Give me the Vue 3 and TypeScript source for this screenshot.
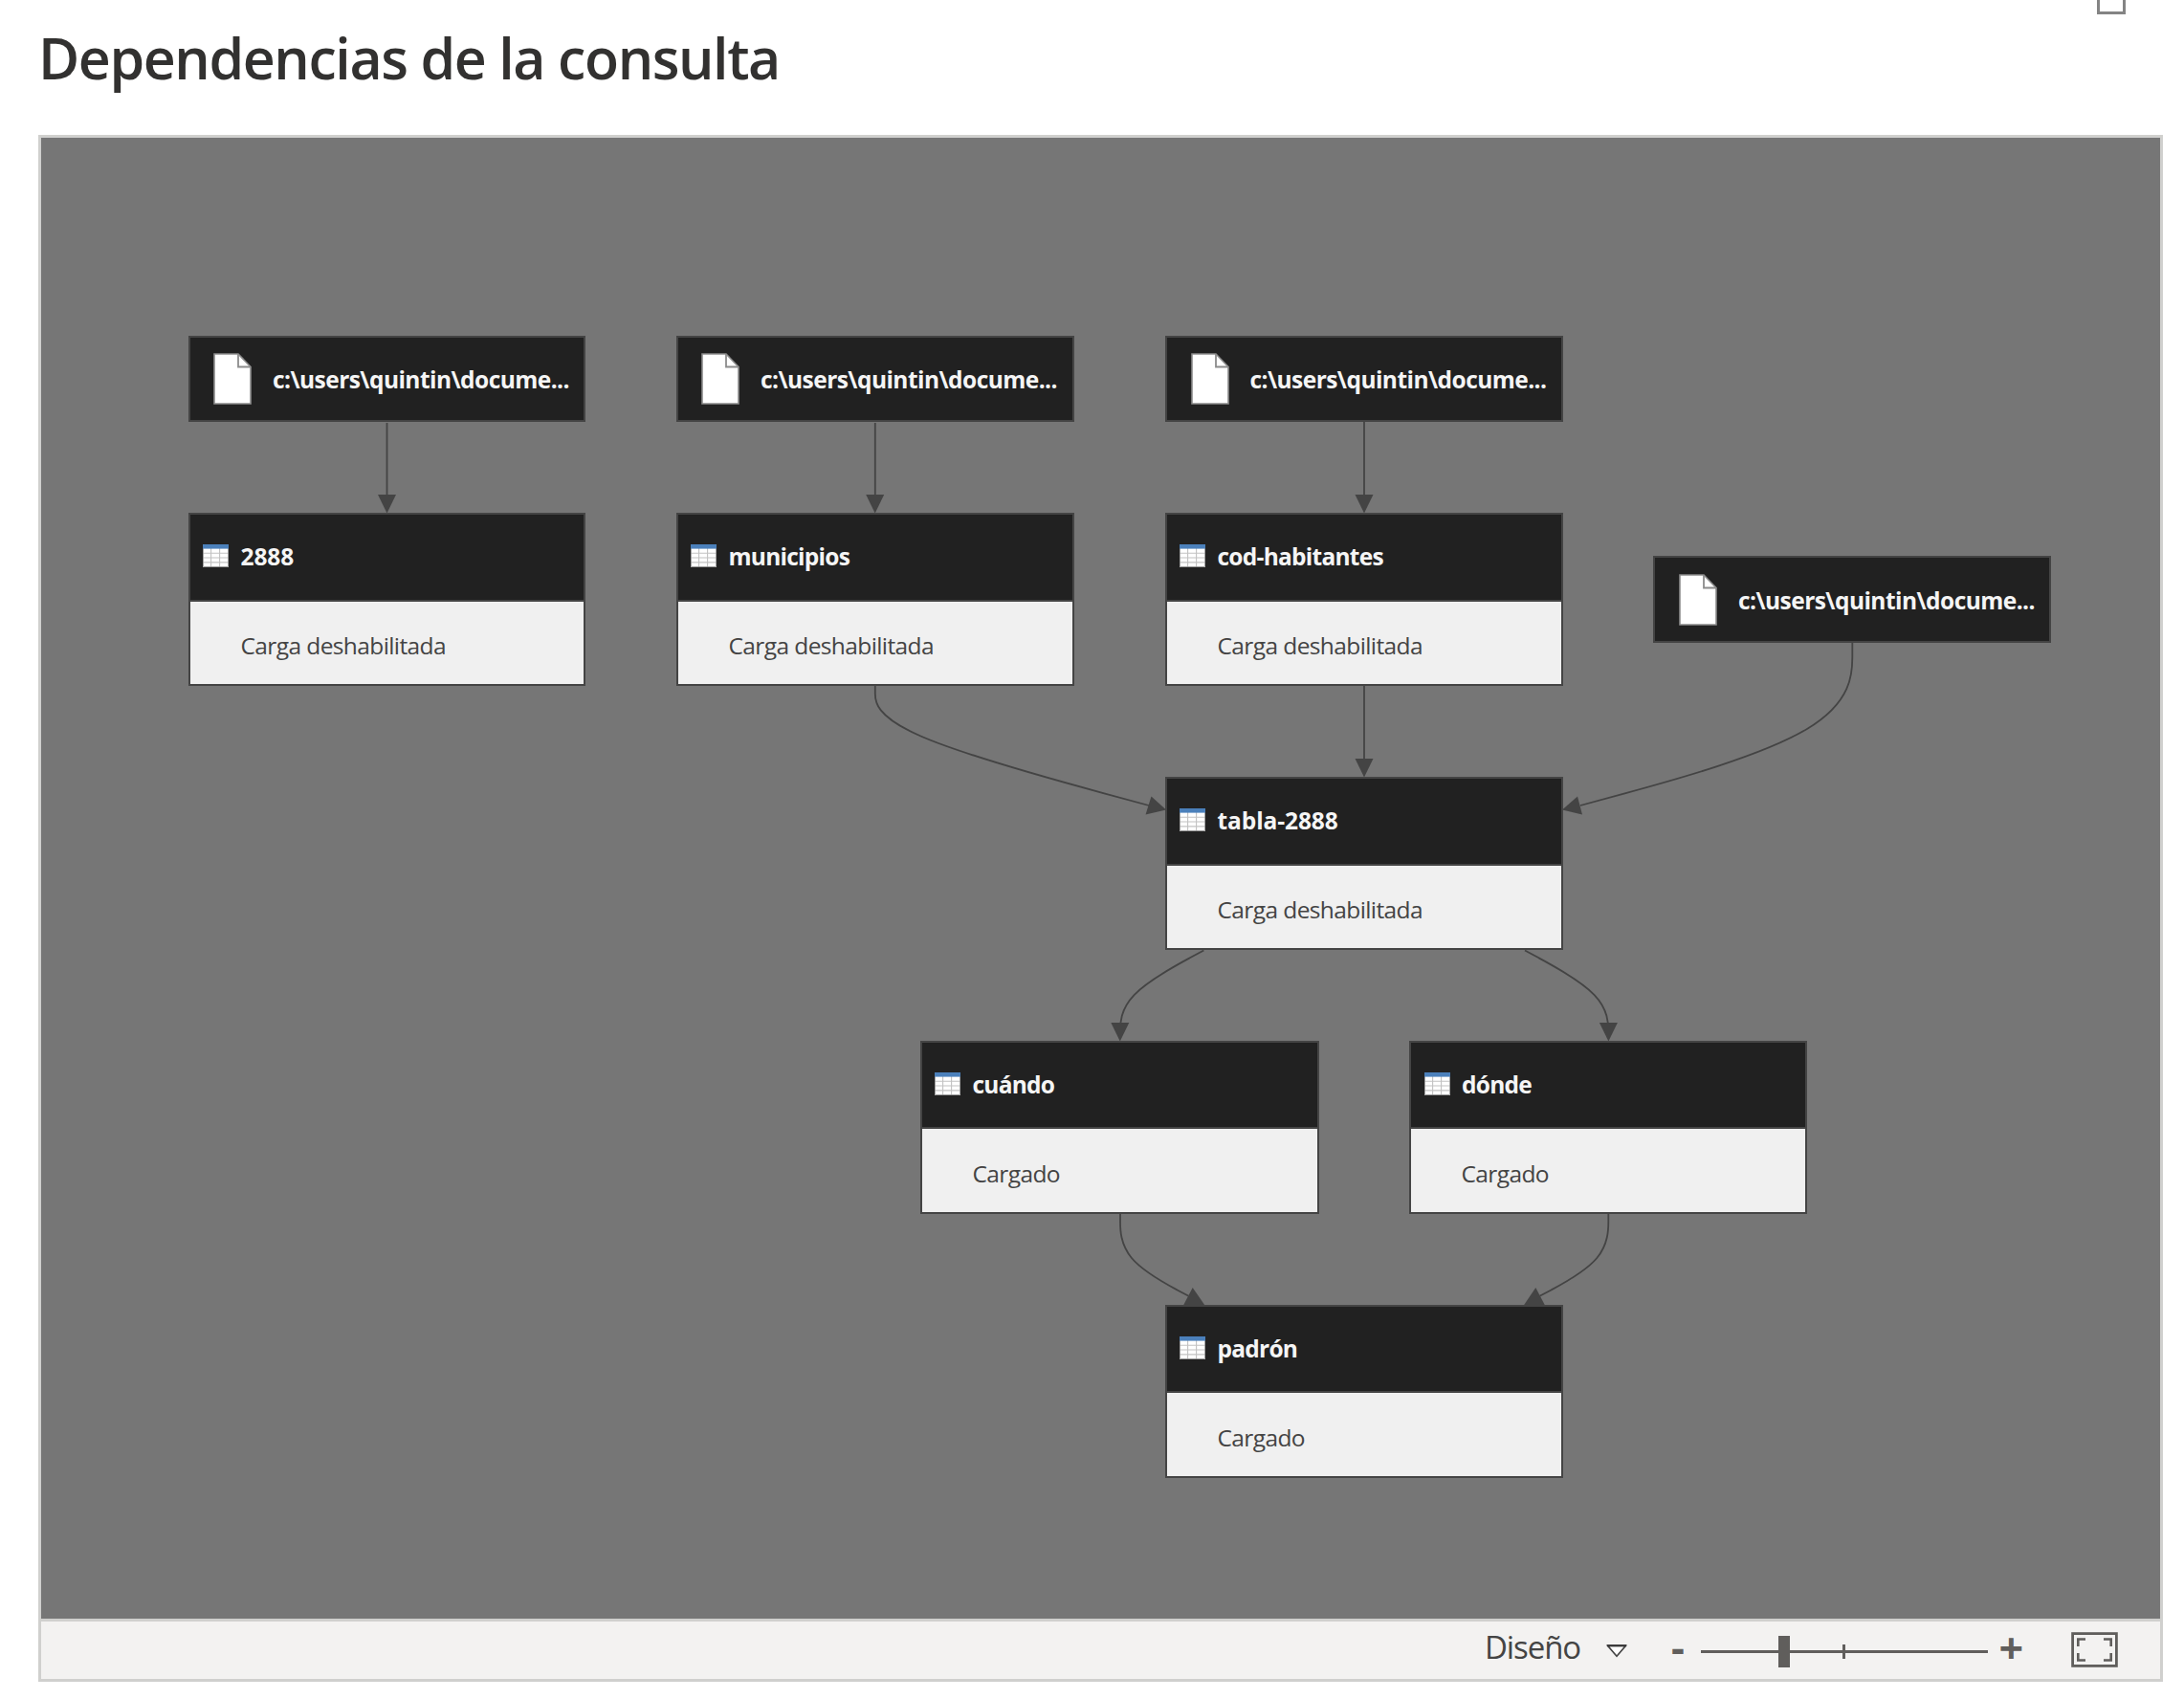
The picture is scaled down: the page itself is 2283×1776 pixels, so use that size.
<script setup lang="ts">
interface DiagramNode {
  id: string
  x: number
  y: number
  w: number
  h: number
  // Left padding in front of the icon.
  pad: number
}

interface QueryNode extends DiagramNode {
  name: string
  status: string
  head: number
}

interface Edge {
  id: string
  path: string
  arrow: string
}

// Diagram coordinates are window coordinates; the canvas starts at this origin.
const origin = { x: 43, y: 144 }

const fileLabel = 'c:\\users\\quintin\\docume...'

const files: DiagramNode[] = [
  { id: 'f1', x: 197, y: 351, w: 415, h: 90, pad: 24 },
  { id: 'f2', x: 707, y: 351, w: 416, h: 90, pad: 24 },
  { id: 'f3', x: 1218, y: 351, w: 416, h: 90, pad: 24.5 },
  { id: 'f4', x: 1728, y: 581, w: 416, h: 91, pad: 25 },
]

const queries: QueryNode[] = [
  { id: 'q1', name: '2888', status: 'Carga deshabilitada', x: 197, y: 536, w: 415, h: 181, head: 91, pad: 13 },
  { id: 'q2', name: 'municipios', status: 'Carga deshabilitada', x: 707, y: 536, w: 416, h: 181, head: 91, pad: 13 },
  { id: 'q3', name: 'cod-habitantes', status: 'Carga deshabilitada', x: 1218, y: 536, w: 416, h: 181, head: 91, pad: 13 },
  { id: 'q4', name: 'tabla-2888', status: 'Carga deshabilitada', x: 1218, y: 812, w: 416, h: 181, head: 91, pad: 13 },
  { id: 'q5', name: 'cuándo', status: 'Cargado', x: 962, y: 1088, w: 417, h: 181, head: 90, pad: 13 },
  { id: 'q6', name: 'dónde', status: 'Cargado', x: 1473, y: 1088, w: 416, h: 181, head: 90, pad: 13.5 },
  { id: 'q7', name: 'padrón', status: 'Cargado', x: 1218, y: 1364, w: 416, h: 181, head: 90, pad: 13 },
]

type Point = [number, number]

// B-spline through one bend point, as a pair of cubic segments.
function spline(a: Point, b: Point, c: Point): string {
  const mix = (wa: number, wb: number, wc: number): string => {
    const s = wa + wb + wc
    return [0, 1].map((i) => ((wa * a[i] + wb * b[i] + wc * c[i]) / s).toFixed(2)).join(',')
  }
  return (
    `M${a} L${mix(5, 1, 0)} C${mix(2, 1, 0)} ${mix(1, 2, 0)} ${mix(1, 4, 1)} ` +
    `C${mix(0, 2, 1)} ${mix(0, 1, 2)} ${mix(0, 1, 5)} L${c}`
  )
}

function down(x: number, y: number): string {
  return `${x - 9.5},${y - 19} ${x + 9.5},${y - 19} ${x},${y + 0.5}`
}

const edges: Edge[] = [
  { id: 'e1', path: 'M404.5,442 V518', arrow: down(404.5, 536) },
  { id: 'e2', path: 'M914.8,442 V518', arrow: down(914.7, 536) },
  { id: 'e3', path: 'M1426,441 V518', arrow: down(1426, 536) },
  { id: 'e4', path: 'M1426,717 V794', arrow: down(1426, 812) },
  {
    id: 'e5',
    path: spline([914.8, 717], [914.8, 764.5], [1201, 842]),
    arrow: '1203.5,832.5 1197.5,851.5 1219,846.5',
  },
  {
    id: 'e6',
    path: spline([1936.3, 672], [1936.3, 764.5], [1652, 842]),
    arrow: '1649,832.5 1654,851.5 1633,846.5',
  },
  { id: 'e7', path: spline([1258.3, 993.5], [1171, 1040.5], [1171, 1085]), arrow: down(1170.8, 1088) },
  { id: 'e8', path: spline([1594, 993.5], [1681.2, 1040.5], [1681.2, 1085]), arrow: down(1681.4, 1088) },
  {
    id: 'e9',
    path: spline([1171, 1269], [1171, 1316.5], [1242.5, 1354.8]),
    arrow: '1246.7,1346 1237,1364.5 1259.5,1364.5',
  },
  {
    id: 'e10',
    path: spline([1681.3, 1269], [1681.3, 1316.5], [1609.5, 1354.8]),
    arrow: '1605.3,1346 1592.8,1364.5 1615,1364.5',
  },
]

function place(n: DiagramNode) {
  return {
    left: `${n.x - origin.x}px`,
    top: `${n.y - origin.y}px`,
    width: `${n.w}px`,
    height: `${n.h}px`,
  }
}
</script>

<template>
  <main class="window">
    <svg class="maximize" width="32" height="17" viewBox="0 0 32 17">
      <rect x="2.5" y="-14" width="27" height="27.5" fill="none" stroke="#848484" stroke-width="3" />
    </svg>
    <h1 class="title">Dependencias de la consulta</h1>
    <section class="frame">
      <div class="canvas">
        <svg class="edges" width="2215" height="1548" viewBox="43 144 2215 1548">
          <g v-for="e in edges" :key="e.id">
            <path :d="e.path" fill="none" stroke="#444" stroke-width="1.8" />
            <polygon :points="e.arrow" fill="#444" />
          </g>
        </svg>

        <div v-for="f in files" :key="f.id" class="node" :style="place(f)">
          <div class="file" :style="{ paddingLeft: `${f.pad}px` }">
            <svg class="file-icon" width="40" height="54" viewBox="0 0 40 54">
              <path d="M1,1 H26 L39,14.5 V53 H1 Z" fill="#fff" stroke="#8c8c8c" stroke-width="1.6" />
              <path d="M26,1 V14.5 H39" fill="none" stroke="#8c8c8c" stroke-width="1.8" />
            </svg>
            <span class="name path">{{ fileLabel }}</span>
          </div>
        </div>

        <div v-for="q in queries" :key="q.id" class="node query" :style="place(q)">
          <div class="head" :style="{ height: `${q.head - 2}px`, paddingLeft: `${q.pad}px` }">
            <svg class="table-icon" width="27" height="24" viewBox="0 0 27 24">
              <rect width="27" height="24" fill="#fff" />
              <path
                d="M0,9.2 H27 M0,14 H27 M0,18.9 H27 M8.6,4 V24 M17.6,4 V24"
                fill="none"
                stroke="#c2c2c2"
                stroke-width="1.1"
              />
              <path d="M.4,4 V23.5 H26.6 V4" fill="none" stroke="#8f8f8f" stroke-width=".9" />
              <rect width="27" height="4.6" fill="#4b80bb" />
            </svg>
            <span class="name" :class="{ numeric: /\d/.test(q.name) }">{{ q.name }}</span>
          </div>
          <div class="status">{{ q.status }}</div>
        </div>
      </div>

      <footer class="toolbar">
        <span class="layout">Diseño</span>
        <svg class="caret" width="22" height="14" viewBox="0 0 22 14">
          <path d="M1.6,1.4 H20.4 L11,12.2 Z" fill="#fff" stroke="#444" stroke-width="1.6" />
          <path d="M1,1.2 H21" stroke="#333" stroke-width="2" />
        </svg>
        <span class="step minus">-</span>
        <div class="slider">
          <div class="thumb"></div>
          <div class="tick"></div>
        </div>
        <span class="step plus">+</span>
        <svg class="fit" width="49" height="37" viewBox="0 0 49 37">
          <rect x="1.6" y="1.6" width="45.8" height="33.8" fill="none" stroke="#605e5c" stroke-width="2.8" />
          <path
            d="M7.3,15 V7.5 H15 M34,7.5 H41.7 V15 M41.7,22 V29.5 H34 M15,29.5 H7.3 V22"
            fill="none"
            stroke="#605e5c"
            stroke-width="2.6"
          />
        </svg>
      </footer>
    </section>
  </main>
</template>

<style>
body {
  background: #fff;
}
</style>

<style scoped>
.window {
  position: relative;
  box-sizing: border-box;
  width: 2283px;
  height: 1776px;
  padding-left: 40px;
  overflow: hidden;
  background: #fff;
  font-family: 'Open Sans', 'Noto Sans', sans-serif;
}

.maximize {
  position: absolute;
  top: 0;
  left: 2191px;
}

.title {
  box-sizing: border-box;
  height: 141px;
  margin: 0;
  padding-top: 30px;
  color: #323130;
  font-size: 59px;
  font-weight: 600;
  line-height: 60px;
  letter-spacing: -1.4px;
  white-space: nowrap;
}

.frame {
  box-sizing: border-box;
  display: flex;
  flex-direction: column;
  width: 2221px;
  height: 1617px;
  border: 3px solid #d0d0ce;
}

.canvas {
  position: relative;
  flex: none;
  height: 1548px;
  background: #767676;
}

.edges {
  position: absolute;
  inset: 0;
}

.node {
  position: absolute;
  box-sizing: border-box;
  border: 2px solid #444;
  background: #212121;
}

.file {
  display: flex;
  align-items: center;
  height: 100%;
}

.file-icon {
  flex: none;
  margin-right: 22px;
}

.name {
  margin-top: 27px;
  color: #f5f5f5;
  font-size: 24.5px;
  font-weight: 700;
  line-height: 34px;
  letter-spacing: -0.75px;
  white-space: nowrap;
}

.numeric {
  letter-spacing: -0.1px;
}

.path {
  margin-top: 2px;
  letter-spacing: -0.55px;
}

.query {
  display: flex;
  flex-direction: column;
}

.head {
  display: flex;
  flex: none;
  align-items: flex-start;
  border-bottom: 2px solid #444;
}

.table-icon {
  flex: none;
  margin-top: 31px;
  margin-right: 12.5px;
}

.status {
  display: flex;
  flex: 1;
  align-items: center;
  padding: 5px 0 0 52.5px;
  background: #f0f0f0;
  color: #444;
  font-size: 24.5px;
  letter-spacing: -0.6px;
  white-space: nowrap;
}

.toolbar {
  display: flex;
  flex: 1;
  align-items: center;
  padding-left: 1509px;
  border-top: 3px solid #d0d0ce;
  background: #f3f2f1;
  color: #605e5c;
}

.layout {
  width: 127px;
  margin-top: -6px;
  color: #444;
  font-size: 33px;
  line-height: 40px;
  letter-spacing: -1.1px;
}

.caret {
  margin-top: 1px;
}

.step {
  font-size: 43px;
  font-weight: 700;
  line-height: 50px;
}

.minus {
  width: 31px;
  margin-top: -7px;
  margin-left: 46px;
}

.slider {
  position: relative;
  width: 300px;
  height: 3px;
  margin-top: 3px;
  background: #605e5c;
}

.thumb {
  position: absolute;
  top: -15px;
  left: 81px;
  width: 12px;
  height: 33px;
  background: #605e5c;
}

.tick {
  position: absolute;
  top: -6px;
  left: 148px;
  width: 3px;
  height: 15px;
  background: #605e5c;
}

.plus {
  width: 75px;
  margin-top: -6px;
  margin-left: 11.5px;
  font-size: 45px;
}

.fit {
  margin-top: -1px;
}
</style>
